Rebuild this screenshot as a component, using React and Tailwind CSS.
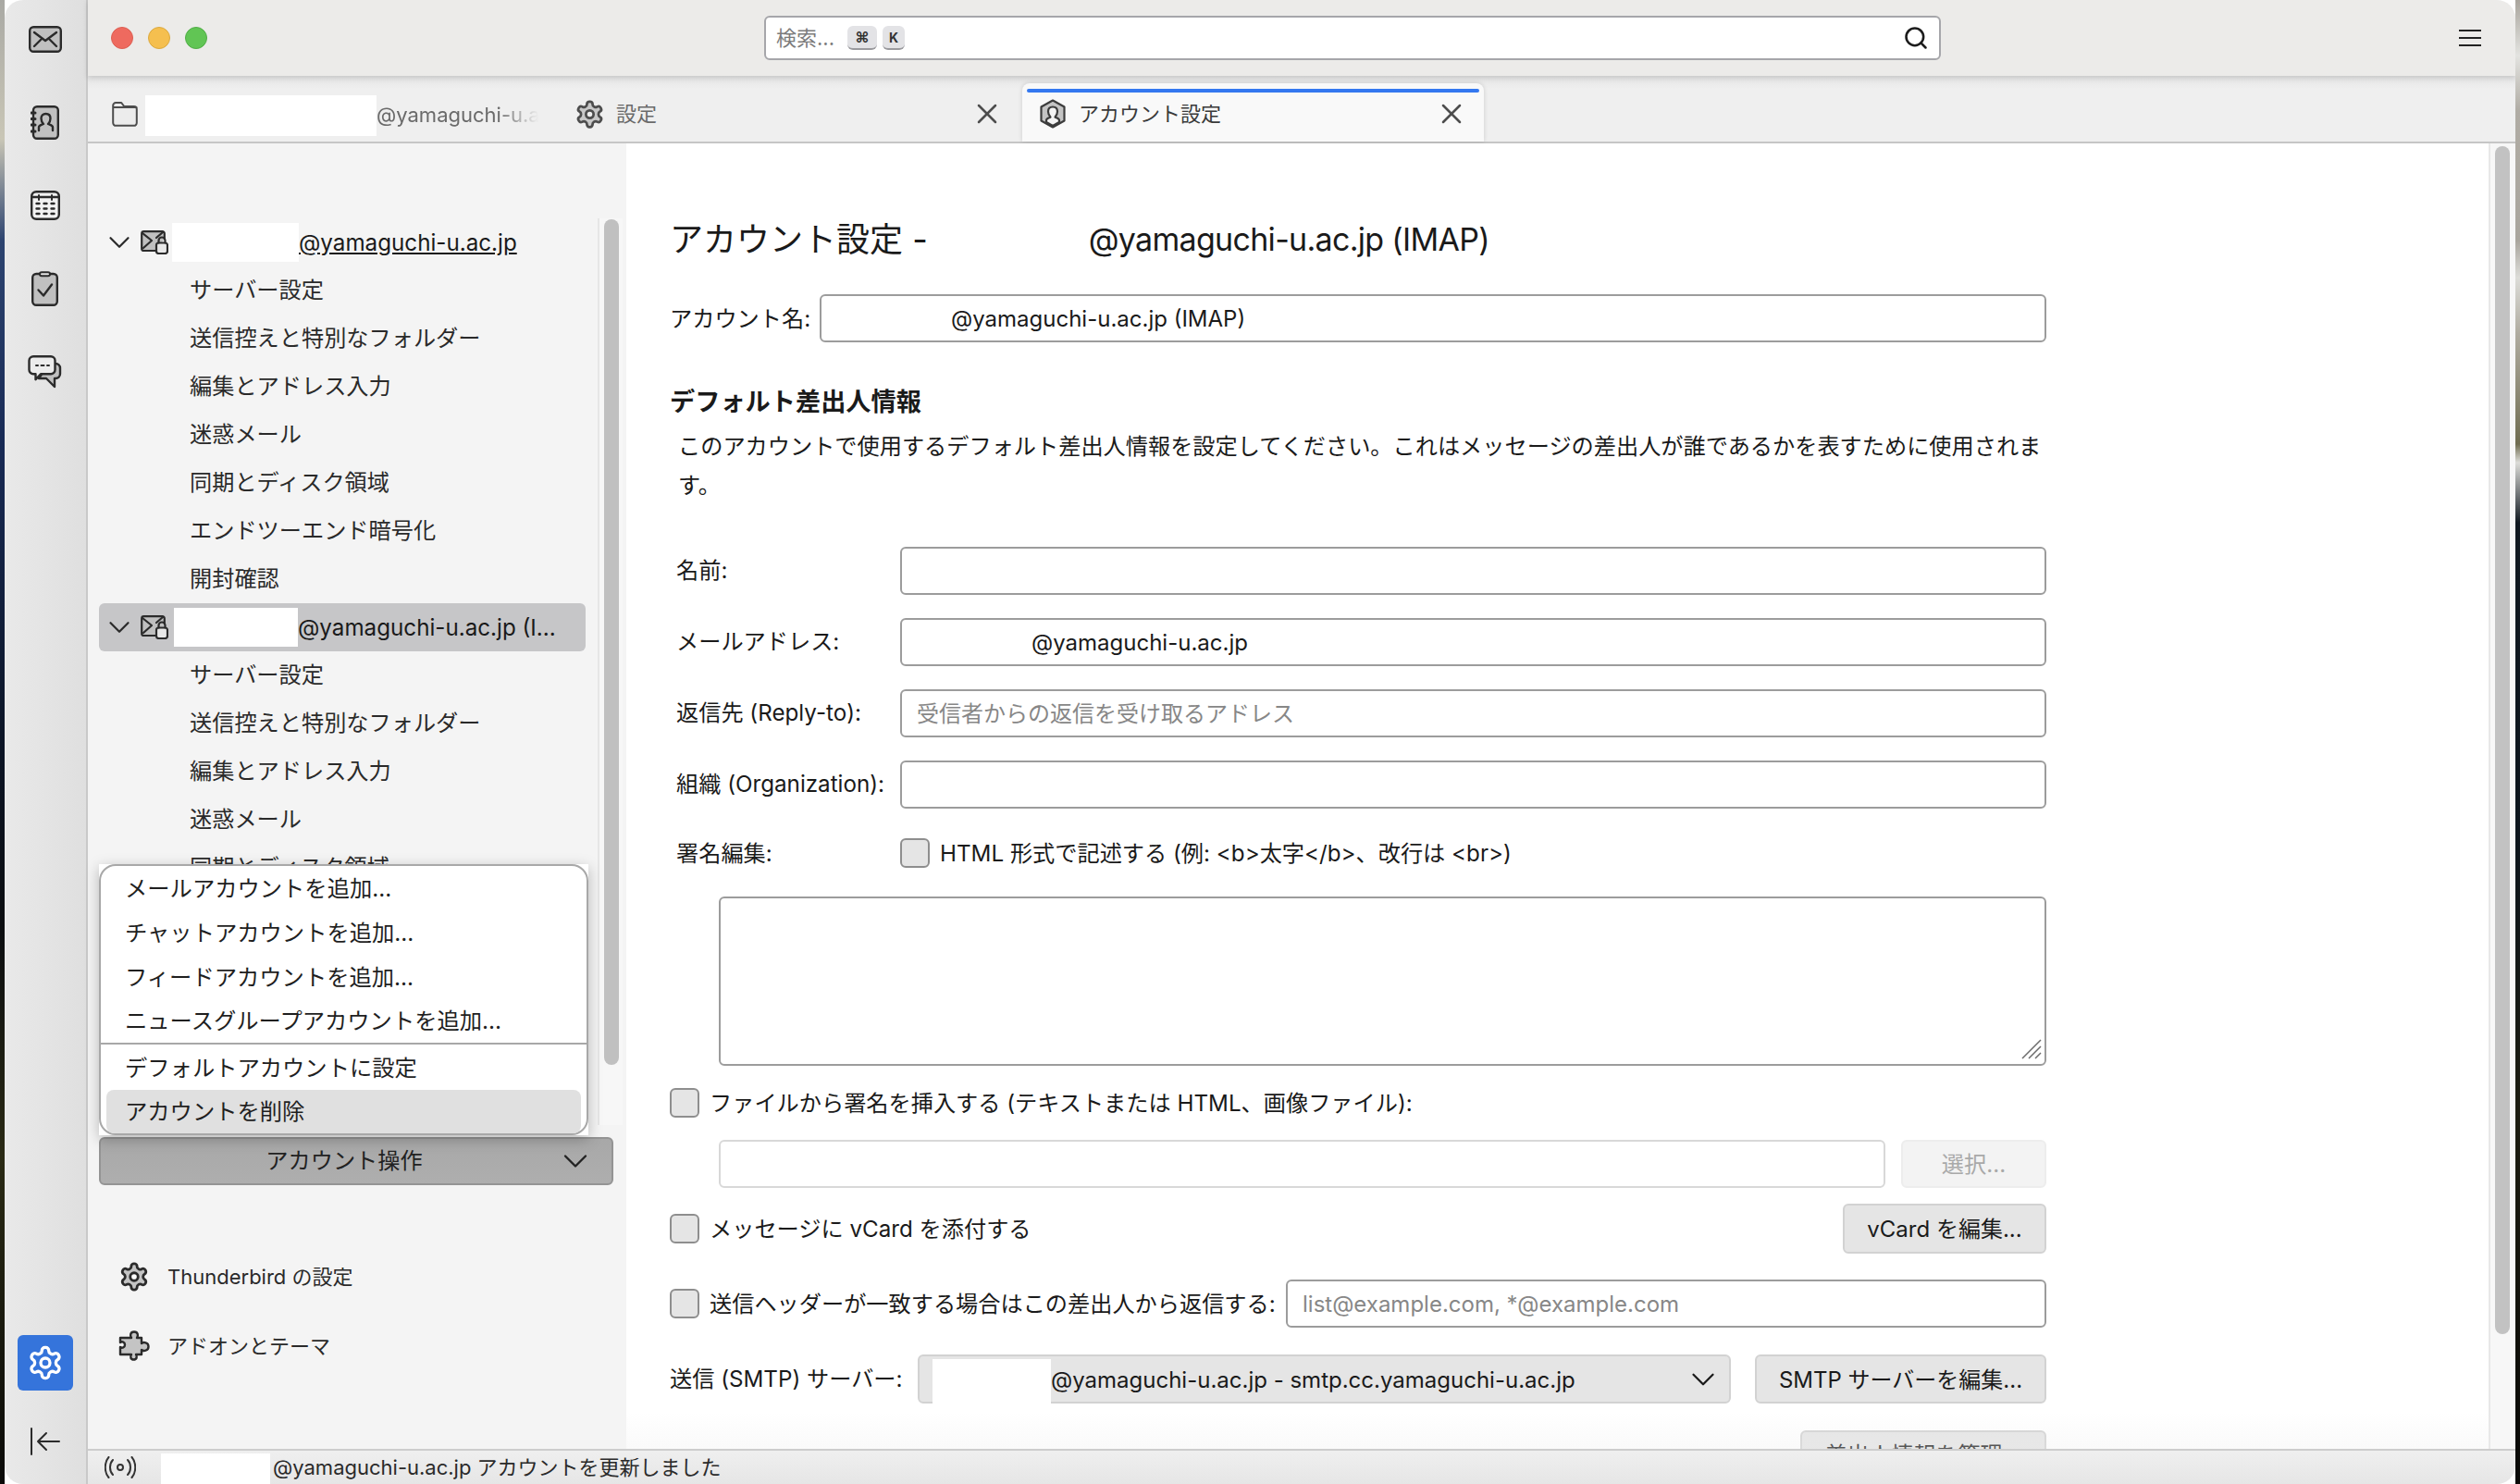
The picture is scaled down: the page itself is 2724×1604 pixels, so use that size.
import { Search, X, ChevronDown } from "lucide-react";

const gearPath =
  "M12.22 2h-.44a2 2 0 0 0-2 2v.18a2 2 0 0 1-1 1.73l-.43.25a2 2 0 0 1-2 0l-.15-.08a2 2 0 0 0-2.73.73l-.22.38a2 2 0 0 0 .73 2.73l.15.1a2 2 0 0 1 1 1.72v.51a2 2 0 0 1-1 1.74l-.15.09a2 2 0 0 0-.73 2.73l.22.38a2 2 0 0 0 2.73.73l.15-.08a2 2 0 0 1 2 0l.43.25a2 2 0 0 1 1 1.73V20a2 2 0 0 0 2 2h.44a2 2 0 0 0 2-2v-.18a2 2 0 0 1 1-1.73l.43-.25a2 2 0 0 1 2 0l.15.08a2 2 0 0 0 2.73-.73l.22-.39a2 2 0 0 0-.73-2.73l-.15-.08a2 2 0 0 1-1-1.74v-.5a2 2 0 0 1 1-1.74l.15-.09a2 2 0 0 0 .73-2.73l-.22-.38a2 2 0 0 0-2.73-.73l-.15.08a2 2 0 0 1-2 0l-.43-.25a2 2 0 0 1-1-1.73V4a2 2 0 0 0-2-2z";

function Gear({ size = 34, stroke = "#2b2b2b", fill = "#c4c4c4", hole = "#ffffff" }) {
  return (
    <svg width={size} height={size} viewBox="0 0 24 24" fill="none" className="shrink-0">
      <path d={gearPath} fill={fill} stroke={stroke} strokeWidth="2" strokeLinejoin="round" />
      <circle cx="12" cy="12" r="3" fill={hole} stroke={stroke} strokeWidth="2" />
    </svg>
  );
}

function MailIcon() {
  return (
    <svg width="36" height="29" viewBox="0 0 36 29" fill="none" stroke="#2b2b2b" strokeWidth="2.4" strokeLinecap="round" strokeLinejoin="round">
      <rect x="1.2" y="1.2" width="33.6" height="26.6" rx="4" fill="#c0c0c0" />
      <path d="M6 7l12 9 12-9M6 22l8.500-8.500M30 22l-8.500-8.500" />
    </svg>
  );
}

function BookIcon() {
  return (
    <svg width="31" height="37" viewBox="0 0 31 37" fill="none" stroke="#2b2b2b" strokeWidth="2.4" strokeLinecap="round" strokeLinejoin="round">
      <rect x="3" y="1.200" width="26.800" height="34.600" rx="4" fill="#c0c0c0" />
      <path d="M1 8h4M1 14.500h4M1 21h4M1 28h4" strokeWidth="3" />
      <path d="M9 27v-3.500c0-2 3-2.500 5-3.500-2-2-2.500-4-2.500-6 0-3 2-5 5-5s5 2 5 5c0 2-.5 4-2.500 6 2 1 5 1.500 5 3.500V27" />
    </svg>
  );
}

function CalendarIcon() {
  return (
    <svg width="32" height="32" viewBox="0 0 32 32" fill="none" stroke="#2b2b2b" strokeWidth="2.4" strokeLinecap="round">
      <rect x="1.200" y="1.200" width="29.600" height="29.600" rx="5" fill="#f2f2f2" />
      <path d="M1.500 7h29" />
      <path d="M9 5v5M23 5v5" strokeWidth="2" />
      <path d="M6.500 14h3M14.500 14h3M22.500 14h3M6.500 19.500h3M14.500 19.500h3M22.500 19.500h3M6.500 25h3M14.500 25h3M22.500 25h3" strokeWidth="2.400" />
    </svg>
  );
}

function TasksIcon() {
  return (
    <svg width="29" height="38" viewBox="0 0 29 38" fill="none" stroke="#2b2b2b" strokeWidth="2.4" strokeLinecap="round" strokeLinejoin="round">
      <rect x="1.200" y="3" width="26.600" height="33.800" rx="4" fill="#c0c0c0" />
      <rect x="9" y="1.200" width="11" height="4" rx="2" fill="#e6e6e6" strokeWidth="2" />
      <path d="M7.500 20.500l5.500 6 9-12" />
    </svg>
  );
}

function ChatIcon() {
  return (
    <svg width="37" height="36" viewBox="0 0 37 36" fill="none" stroke="#2b2b2b" strokeWidth="2.4" strokeLinecap="round" strokeLinejoin="round">
      <path d="M26 9h4a5 5 0 0 1 5 5v6a5 5 0 0 1-5 5h-1v9l-9-9h-8l10-15z" fill="#c0c0c0" />
      <path d="M6 1.200h19a4.500 4.500 0 0 1 4.500 4.500v10a4.500 4.500 0 0 1-4.500 4.500H14l-5.500 6v-6H6a4.500 4.500 0 0 1-4.500-4.500v-10A4.500 4.500 0 0 1 6 1.200z" fill="#ececec" />
      <path d="M9 11h2M14.500 11h3M21 11h2" strokeWidth="2" />
    </svg>
  );
}

function CollapseIcon() {
  return (
    <svg width="34" height="30" viewBox="0 0 34 30" fill="none" stroke="#2b2b2b" strokeWidth="2" strokeLinecap="round" strokeLinejoin="round">
      <path d="M2 1v28M32 15H9M18 6l-9 9 9 9" />
    </svg>
  );
}

function FolderIcon() {
  return (
    <svg width="28" height="27" viewBox="0 0 28 27" fill="none" stroke="#4d4d4d" strokeWidth="2" strokeLinejoin="round" className="shrink-0">
      <path d="M1.200 4a3 3 0 0 1 3-3h6l3 4h10.600a3 3 0 0 1 3 3v14.800a3 3 0 0 1-3 3H4.200a3 3 0 0 1-3-3z" fill="#ececec" />
      <path d="M1.200 6h26" />
    </svg>
  );
}

function AccountTabIcon() {
  return (
    <svg width="30" height="32" viewBox="0 0 30 32" fill="none" stroke="#3c3c3c" strokeWidth="2.200" strokeLinejoin="round" strokeLinecap="round" className="shrink-0">
      <path d="M15 1.500l12.500 7v15L15 30.500 2.500 23.500v-15z" fill="#c4c4c4" />
      <path d="M8 25v-2c0-2 3-2.500 4.500-3.500-1.500-1.500-2.500-3-2.500-6 0-3 2-5 5-5s5 2 5 5c0 3-1 4.500-2.500 6 1.500 1 4.500 1.500 4.500 3.500v2L15 29z" fill="#f4f4f4" />
    </svg>
  );
}

function AccountMailIcon() {
  return (
    <svg width="30" height="26" viewBox="0 0 30 26" fill="none" stroke="#2b2b2b" strokeWidth="2.200" strokeLinecap="round" strokeLinejoin="round">
      <path d="M17 22H3.500a2.300 2.300 0 0 1-2.300-2.300V3.500a2.300 2.300 0 0 1 2.300-2.300h20a2.300 2.300 0 0 1 2.300 2.300V9" fill="#c0c0c0" />
      <path d="M2 3l10 8-9 8M24 2l-7 6" />
      <rect x="17" y="13.500" width="12" height="11.500" rx="2.500" fill="#e8e8e8" />
      <path d="M19.500 13.500v-2.500a3.500 3.500 0 0 1 7 0v2.500" />
    </svg>
  );
}

function PuzzleIcon() {
  return (
    <svg width="34" height="34" viewBox="0 0 34 34" fill="none" stroke="#2b2b2b" strokeWidth="2.400" strokeLinejoin="round">
      <path d="M9 8h5c-1.500-2-1.500-6.500 3-6.500s4.500 4.500 3 6.500h5v6c2-1.500 7.500-1.500 7.500 3.500s-5.500 5-7.500 3.500v5h-6c1.500 2 1 5.500-2.500 5.500s-4-3.500-2.500-5.500H2v-8c2 1.500 5 .5 5-2.500s-3-4-5-2.500V8z" fill="#c4c4c4" />
    </svg>
  );
}

function RadioIcon() {
  return (
    <svg width="34" height="24" viewBox="0 0 34 24" fill="none" stroke="#333333" strokeWidth="2" strokeLinecap="round">
      <circle cx="17" cy="12" r="3" />
      <path d="M9 4c-4 4-4 12 0 16M25 4c4 4 4 12 0 16M4.500 1c-5 6-5 16 0 22M29.500 1c5 6 5 16 0 22" />
    </svg>
  );
}

function Strip({ wide }) {
  return <div className={wide} />;
}

function SpaceSlot({ children }) {
  return <div className="flex h-[60px] items-center justify-center">{children}</div>;
}

function SpacesBar() {
  return (
    <div className="flex w-[90px] shrink-0 flex-col items-center border-r-2 border-[#c9c9c9] bg-[linear-gradient(to_right,#e9e9e9,#dfdfdf)] pr-[1px] pt-[12px] pb-[31px]">
      <div className="flex flex-col gap-[30px]">
        <SpaceSlot><MailIcon /></SpaceSlot>
        <SpaceSlot><BookIcon /></SpaceSlot>
        <SpaceSlot><CalendarIcon /></SpaceSlot>
        <SpaceSlot><TasksIcon /></SpaceSlot>
        <SpaceSlot><ChatIcon /></SpaceSlot>
      </div>
      <div className="mt-auto flex h-[60px] w-[60px] items-center justify-center rounded-[6px] bg-[#3574db]">
        <Gear size={40} stroke="#ffffff" fill="none" hole="none" />
      </div>
      <div className="mt-[40px] flex h-[30px] items-center">
        <CollapseIcon />
      </div>
    </div>
  );
}

function TitleBar() {
  return (
    <div className="relative z-10 flex h-[82px] shrink-0 items-center bg-[#ecebe9] shadow-[0_2px_6px_rgba(0,0,0,0.14)]">
      <div className="ml-[25px] flex gap-[16px]">
        <div className="h-[24px] w-[24px] rounded-full border border-[#dd5f52] bg-[#ee6a5f]" />
        <div className="h-[24px] w-[24px] rounded-full border border-[#dba93f] bg-[#f5bf4f]" />
        <div className="h-[24px] w-[24px] rounded-full border border-[#50ad46] bg-[#61c554]" />
      </div>
      <div className="ml-[602px] flex h-[48px] w-[1272px] items-center rounded-[6px] border-2 border-[#a6a6aa] bg-white pl-[11px] pr-[11px]">
        <span className="text-[22px] text-[#7c7c7c]">検索...</span>
        <span className="ml-[14px] flex h-[26px] w-[32px] items-center justify-center rounded-[6px] border-b-2 border-[#9a9a9e] bg-[#e3e3e6] text-[16px] font-bold text-[#333]">⌘</span>
        <span className="ml-[6px] flex h-[26px] w-[24px] items-center justify-center rounded-[6px] border-b-2 border-[#9a9a9e] bg-[#e3e3e6] text-[14px] font-bold text-[#333]">K</span>
        <Search size={28} strokeWidth={2.2} className="ml-auto text-[#1c1c1c]" />
      </div>
      <div className="ml-[560px] flex w-[24px] flex-col gap-[6px]">
        <div className="h-[2px] bg-[#222]" />
        <div className="h-[2px] bg-[#222]" />
        <div className="h-[2px] bg-[#222]" />
      </div>
    </div>
  );
}

function TabBar() {
  return (
    <div className="flex h-[73px] shrink-0 items-end border-b-2 border-[#c6c6c6] bg-[linear-gradient(#e4e4e4,#efefef_14px)] text-[22px] text-[#6a6a6a]">
      <div className="flex h-[63px] w-[510px] flex-col pt-[10px]">
        <div className="flex h-[46px] items-center whitespace-nowrap pl-[26px]">
          <FolderIcon />
          <div className="ml-[8px] mt-[4px] h-[44px] w-[250px] shrink-0 bg-white" />
          <span className="w-[175px] overflow-hidden pt-[2px] [mask-image:linear-gradient(to_right,black_75%,transparent)]">@yamaguchi-u.ac.jp</span>
        </div>
      </div>
      <div className="flex h-[63px] w-[500px] flex-col pt-[10px]">
        <div className="flex h-[46px] items-center whitespace-nowrap pl-[16px]">
          <Gear size={33} stroke="#4d4d4d" fill="#c8c8c8" hole="#eeeeee" />
          <span className="ml-[12px]">設定</span>
          <X size={36} strokeWidth={1.7} className="ml-[339px] shrink-0 text-[#4d4d4d]" />
        </div>
      </div>
      <div className="flex h-[63px] w-[499px] flex-col rounded-t-[8px] bg-[#f9f9f9] shadow-[0_0_5px_rgba(0,0,0,0.15)]">
        <div className="mx-[5px] mt-[6px] h-[4px] shrink-0 rounded-full bg-[#3478f0]" />
        <div className="flex h-[46px] items-center whitespace-nowrap pl-[18px] text-[#3a3a3a]">
          <AccountTabIcon />
          <span className="ml-[13px]">アカウント設定</span>
          <X size={36} strokeWidth={1.7} className="ml-[231px] shrink-0 text-[#4d4d4d]" />
        </div>
      </div>
    </div>
  );
}

function AccountRow({ blank, email, selected, underline }) {
  return (
    <div className={`flex h-[52px] items-center pl-[11px] ${selected ? "rounded-[6px] bg-[#c6c6c8]" : ""}`}>
      <ChevronDown size={38} strokeWidth={1.4} className="-ml-[8px] shrink-0 text-[#2b2b2b]" />
      <div className="ml-[4px]">
        <AccountMailIcon />
      </div>
      <div className={`h-[42px] shrink-0 bg-white ${blank}`} />
      <span className={`whitespace-nowrap pt-[2px] text-[#1a1a1a] ${underline ? "underline" : ""}`}>{email}</span>
    </div>
  );
}

const subItems = [
  "サーバー設定",
  "送信控えと特別なフォルダー",
  "編集とアドレス入力",
  "迷惑メール",
  "同期とディスク領域",
  "エンドツーエンド暗号化",
  "開封確認",
];

function SubItems({ items }) {
  return items.map((item) => (
    <div key={item} className="flex h-[52px] items-center pl-[98px] text-[#2a2a2a]">
      {item}
    </div>
  ));
}

function AccountMenu() {
  return (
    <div className="absolute left-[12px] top-[779px] w-[529px] bg-white text-[24.300px] shadow-[0_4px_14px_rgba(0,0,0,0.25)]">
      <div className="rounded-[18px] border-2 border-[#a8a8a8] bg-white text-[#1f1f1f]">
        <div className="flex h-[48px] items-center pl-[26px]">メールアカウントを追加...</div>
        <div className="flex h-[48px] items-center pl-[26px]">チャットアカウントを追加...</div>
        <div className="flex h-[48px] items-center pl-[26px]">フィードアカウントを追加...</div>
        <div className="flex h-[47px] items-center pl-[26px]">ニュースグループアカウントを追加...</div>
        <div className="h-[2px] bg-[#a8a8a8]" />
        <div className="flex h-[49px] items-center pl-[26px] pt-[2px]">デフォルトアカウントに設定</div>
        <div className="mx-[6px] flex h-[47px] items-center rounded-[8px] bg-[#e0e0e0] pl-[20px]">アカウントを削除</div>
      </div>
    </div>
  );
}

function Sidebar() {
  return (
    <div className="relative flex w-[582px] shrink-0 flex-col bg-[#f4f4f4] pt-[81px] text-[24.200px]">
      <div className="flex h-[980px] shrink-0">
        <div className="ml-[12px] w-[526px] shrink-0 overflow-hidden">
          <AccountRow blank="ml-[4px] w-[137px]" email="@yamaguchi-u.ac.jp" underline />
          <SubItems items={subItems} />
          <AccountRow blank="ml-[6px] w-[134px]" email="@yamaguchi-u.ac.jp (I..." selected />
          <SubItems items={subItems.slice(0, 5)} />
        </div>
        <div className="ml-[13px] w-[27px] border-l-2 border-[#e6e6e6] bg-[#f7f7f7] pl-[5px] pt-[1px]">
          <div className="h-[914px] w-[16px] rounded-full bg-[#c0c0c0]" />
        </div>
      </div>
      <AccountMenu />
      <div className="ml-[12px] mt-[13px] flex h-[52px] w-[556px] items-center rounded-[6px] border-2 border-[#949494] bg-[linear-gradient(#a8a8a8,#aeaeae)] text-[#222]">
        <span className="ml-[28px] w-[470px] text-center">アカウント操作</span>
        <ChevronDown size={44} strokeWidth={1.3} className="-ml-[7px] shrink-0 text-[#222]" />
      </div>
      <div className="ml-[33px] mt-[73px] flex h-[52px] items-center text-[22px] text-[#2a2a2a]">
        <Gear size={34} fill="#c4c4c4" hole="#ffffff" />
        <span className="ml-[19px]">Thunderbird の設定</span>
      </div>
      <div className="ml-[33px] mt-[23px] flex h-[52px] items-center text-[22px] text-[#2a2a2a]">
        <PuzzleIcon />
        <span className="ml-[19px]">アドオンとテーマ</span>
      </div>
    </div>
  );
}

const fieldClass = "h-full w-full rounded-[6px] border-2 border-[#9c9c9c] bg-white px-[16px] text-[24px] text-[#1a1a1a] outline-none placeholder:text-[#878787]";
const buttonClass = "flex h-full items-center justify-center rounded-[6px] border-2 border-[#d2d2d2] bg-[#e5e5e5] text-[24px] text-[#1a1a1a]";

function Check() {
  return <input type="checkbox" readOnly className="h-[32px] w-[32px] shrink-0 appearance-none rounded-[6px] border-2 border-[#8e8e8e] bg-[#e5e5e5]" />;
}

function FormRow({ label, value, placeholder, inset }) {
  return (
    <>
      <div className="flex h-[52px] items-center whitespace-nowrap pt-[1px]">{label}</div>
      <div className="h-[52px]">
        <input className={`${fieldClass} ${inset || ""}`} defaultValue={value} placeholder={placeholder} />
      </div>
    </>
  );
}

function Content() {
  return (
    <div className="relative min-w-0 flex-1 overflow-hidden bg-white pl-[47px] pt-[80px] text-[24.200px] text-[#1a1a1a]">
      <div className="w-[1488px]">
        <div className="flex h-[48px] items-center whitespace-nowrap text-[36px] leading-[48px]">
          <span>アカウント設定 -</span>
          <span className="ml-[174px] text-[34px] tracking-[-0.7px]">@yamaguchi-u.ac.jp (IMAP)</span>
        </div>
        <div className="mt-[35px] flex h-[52px] items-center">
          <span className="w-[162px] shrink-0 pt-[2px]">アカウント名:</span>
          <input className={`${fieldClass} pl-[140px]`} defaultValue="@yamaguchi-u.ac.jp (IMAP)" />
        </div>
        <h2 className="mt-[47px] h-[36px] text-[27.200px] font-bold leading-[36px]">デフォルト差出人情報</h2>
        <p className="mt-[9px] pl-[9px] leading-[42px]">
          このアカウントで使用するデフォルト差出人情報を設定してください。これはメッセージの差出人が誰であるかを表すために使用されます。
        </p>
        <div className="mt-[45px] grid grid-cols-[242px_1fr] gap-y-[25px] pl-[7px]">
          <FormRow label="名前:" />
          <FormRow label="メールアドレス:" value="@yamaguchi-u.ac.jp" inset="pl-[140px]" />
          <FormRow label="返信先 (Reply-to):" placeholder="受信者からの返信を受け取るアドレス" />
          <FormRow label="組織 (Organization):" />
        </div>
        <div className="mt-[32px] grid grid-cols-[242px_1fr] pl-[7px]">
          <div className="flex h-[32px] items-center pt-[2px]">署名編集:</div>
          <div className="flex h-[32px] items-center gap-[11px]">
            <Check />
            <span className="pt-[2px]">{"HTML 形式で記述する (例: <b>太字</b>、改行は <br>)"}</span>
          </div>
        </div>
        <div className="relative ml-[53px] mt-[31px] h-[183px]">
          <textarea className="h-full w-full resize-none rounded-[6px] border-2 border-[#9c9c9c] bg-white outline-none" />
          <svg className="absolute bottom-[6px] right-[4px]" width="24" height="24" viewBox="0 0 24 24" fill="none" stroke="#6b6b6b" strokeWidth="1.5">
            <path d="M2 22L22 2M9 22L22 9M16 22l6-6" />
          </svg>
        </div>
        <div className="mt-[24px] flex h-[32px] items-center gap-[11px]">
          <Check />
          <span className="pt-[2px]">ファイルから署名を挿入する (テキストまたは HTML、画像ファイル):</span>
        </div>
        <div className="ml-[53px] mt-[24px] flex h-[52px] gap-[17px]">
          <input className="h-full flex-1 rounded-[6px] border-2 border-[#d8d8d8] bg-white outline-none" />
          <div className="flex h-full w-[157px] items-center justify-center rounded-[6px] border-2 border-[#ededed] bg-[#f3f3f3] pt-[2px] text-[#a9a9a9]">選択...</div>
        </div>
        <div className="mt-[17px] flex h-[54px] items-center gap-[11px]">
          <Check />
          <span className="pt-[2px]">メッセージに vCard を添付する</span>
          <div className={`${buttonClass} ml-auto w-[220px] pt-[2px]`}>vCard を編集...</div>
        </div>
        <div className="mt-[28px] flex h-[52px] items-center gap-[11px]">
          <Check />
          <span className="whitespace-nowrap pt-[2px]">送信ヘッダーが一致する場合はこの差出人から返信する:</span>
          <input className={`${fieldClass} ml-auto !w-[822px] shrink-0`} placeholder="list@example.com, *@example.com" />
        </div>
        <div className="mt-[29px] flex h-[53px] items-center">
          <span className="whitespace-nowrap pt-[2px]">送信 (SMTP) サーバー:</span>
          <div className="ml-auto mr-[26px] flex h-full w-[879px] items-center rounded-[6px] border-2 border-[#d2d2d2] bg-[#e5e5e5] pl-[14px] text-[24px]">
            <div className="mt-[6px] h-[50px] w-[128px] shrink-0 bg-white" />
            <span className="whitespace-nowrap pt-[2px]">@yamaguchi-u.ac.jp - smtp.cc.yamaguchi-u.ac.jp</span>
            <ChevronDown size={42} strokeWidth={1.3} className="ml-auto mr-[7px]" />
          </div>
          <div className={`${buttonClass} w-[315px] pt-[2px]`}>SMTP サーバーを編集...</div>
        </div>
        <div className="mt-[29px] flex justify-end">
          <div className={`${buttonClass} !h-[54px] w-[266px]`}>差出人情報を管理...</div>
        </div>
      </div>
      <div className="absolute inset-x-0 bottom-0 h-[40px] bg-[linear-gradient(to_bottom,rgba(238,238,238,0),rgba(238,238,238,0.3))]" />
    </div>
  );
}

function PageScrollbar() {
  return (
    <div className="w-[29px] shrink-0 border-l-2 border-[#e8e8e8] bg-[#f7f7f7] pl-[5px] pt-[3px]">
      <div className="h-[1284px] w-[16px] rounded-full bg-[#c2c2c2]" />
    </div>
  );
}

function StatusBar() {
  return (
    <div className="relative z-10 flex h-[38px] shrink-0 items-center border-t-2 border-[#cdcdcd] bg-[linear-gradient(#efefef,#e6e6e6)] pl-[18px] text-[22px] text-[#2a2a2a]">
      <RadioIcon />
      <div className="ml-[27px] mt-[4px] h-[34px] w-[118px] shrink-0 bg-white" />
      <span className="ml-[3px] whitespace-nowrap">@yamaguchi-u.ac.jp アカウントを更新しました</span>
    </div>
  );
}

export default function App() {
  return (
    <div className="flex h-[1604px] w-[2724px] overflow-hidden font-['Inter','Noto_Sans_CJK_JP',sans-serif]">
      <Strip wide="w-[5px] shrink-0 bg-[linear-gradient(#a9a9a4,#c9c6b6_150px,#2d4470_260px,#182a55_480px,#0c1526_800px,#0b0d10_1000px,#2a2a14_1250px,#0a0a08_1604px)]" />
      <div className="flex min-w-0 flex-1 overflow-hidden rounded-[20px]">
        <SpacesBar />
        <div className="flex min-w-0 flex-1 flex-col bg-white">
          <TitleBar />
          <TabBar />
          <div className="flex min-h-0 flex-1">
            <Sidebar />
            <Content />
            <PageScrollbar />
          </div>
          <StatusBar />
        </div>
      </div>
      <Strip wide="w-[5px] shrink-0 bg-[linear-gradient(#a9a59d,#e3e3e0_60px,#b0aca4_120px,#a9a59d_260px,#dcdcd8_300px,#b0aca0_360px,#6f6c50_480px,#dcdcd8_500px,#101820_565px,#0c141c_900px,#1c1c10_1200px,#0a0a08_1604px)]" />
    </div>
  );
}
